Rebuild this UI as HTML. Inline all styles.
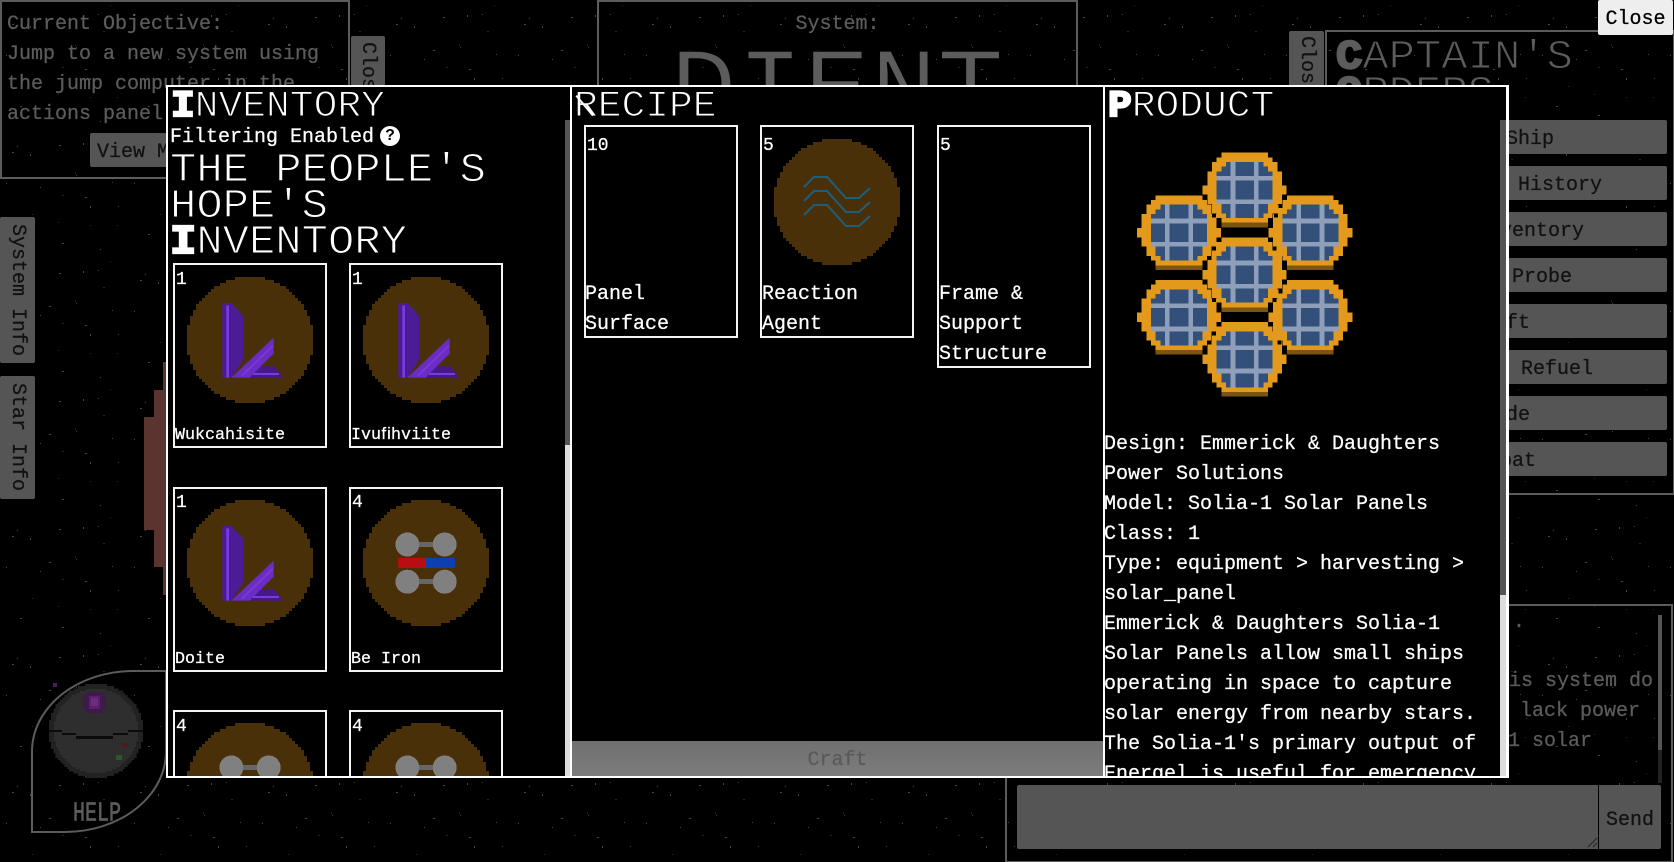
<!DOCTYPE html>
<html><head><meta charset="utf-8"><title>Crafting</title>
<style>
html,body{margin:0;padding:0;background:#000;width:1674px;height:862px;overflow:hidden}
body{position:relative;font-family:"Liberation Mono","DejaVu Sans Mono",monospace;font-size:20px;color:#5c5c5c;-webkit-text-stroke:.25px currentColor}
.a{position:absolute}
.t{position:absolute;white-space:pre;line-height:30px}
.h{position:absolute;white-space:pre;font-size:37px;line-height:36px;letter-spacing:0;-webkit-text-stroke:1.1px #000;color:#fff;transform:scaleX(1.07);transform-origin:0 0}
.h2{font-size:41px}
.h b{-webkit-text-stroke:2.2px #fff;font-weight:bold}
.g{color:#5c5c5c}.g b{-webkit-text-stroke:2.2px #5c5c5c}
.btn{position:absolute;left:1333px;width:334px;height:34px;background:#555;color:#111;border-radius:2px;text-align:center;line-height:39px;overflow:hidden}
.tab{position:absolute;background:#555;color:#111;border-radius:2px;writing-mode:vertical-rl;text-align:center;line-height:35px}
.card{position:absolute;width:150px;border:2px solid #f4f4f4}
.n{position:absolute;white-space:pre;font-size:18px;line-height:30px;color:#fff}
.l{position:absolute;white-space:pre;font-size:16.67px;line-height:30px;color:#fff}
.w{position:absolute;white-space:pre;line-height:30px;color:#fff}
#m{position:absolute;left:0;top:0;width:1674px;height:862px;clip-path:inset(87px 168px 86px 168px);background:#000}
svg{position:absolute;display:block}
</style></head><body>

<svg width="1674" height="862" style="left:0;top:0" shape-rendering="crispEdges">
<defs>
<pattern id="st" width="128" height="128" patternUnits="userSpaceOnUse">
<g fill="#444">
<rect x="59" y="17" width="2" height="1"/><rect x="83" y="15" width="1" height="2"/><rect x="98" y="14" width="1" height="1"/>
<rect x="17" y="18" width="1" height="1"/><rect x="12" y="24" width="2" height="1"/><rect x="30" y="26" width="1" height="2"/>
<rect x="49" y="50" width="2" height="1"/><rect x="76" y="47" width="1" height="1"/><rect x="112" y="54" width="1" height="1"/>
<rect x="6" y="55" width="1" height="1"/><rect x="40" y="59" width="1" height="1"/><rect x="85" y="69" width="2" height="1"/>
<rect x="90" y="78" width="1" height="2"/><rect x="118" y="78" width="1" height="1"/><rect x="62" y="115" width="2" height="1"/>
<rect x="100" y="121" width="1" height="1"/><rect x="20" y="106" width="2" height="1"/>
</g>
<g fill="#2a2a2a"><rect x="58" y="94" width="1" height="1"/><rect x="90" y="97" width="1" height="1"/><rect x="117" y="97" width="1" height="1"/><rect x="75" y="45" width="1" height="1"/><rect x="110" y="5" width="1" height="1"/><rect x="32" y="86" width="1" height="1"/></g>
<rect x="103" y="31" width="2" height="1" fill="#1c1c3f"/>
<rect x="62" y="67" width="2" height="1" fill="#3f1c1c"/>
</pattern>
<path id="c" d="M16 0H26V1H29V2H31V3H33V4H34V5H35V6H36V7H37V8H38V9H39V11H40V13H41V16H42V26H41V29H40V31H39V33H38V34H37V35H36V36H35V37H34V38H33V39H31V40H29V41H26V42H16V41H13V40H11V39H9V38H8V37H7V36H6V35H5V34H4V33H3V31H2V29H1V26H0V16H1V13H2V11H3V9H4V8H5V7H6V6H7V5H8V4H9V3H11V2H13V1H16Z"/>
</defs>
<rect width="1674" height="862" fill="url(#st)"/>
<!-- red planet -->
<rect x="144" y="417" width="24" height="113" fill="#5c342f"/>
<rect x="154" y="390" width="14" height="177" fill="#5c342f"/>
<rect x="163" y="362" width="5" height="233" fill="#5c342f"/>
<!-- help planet -->
<g transform="translate(49 684) scale(2.238)"><use href="#c" fill="#222"/></g>
<g transform="translate(54 689) scale(2)"><use href="#c" fill="#2e2e2e"/></g>
<g fill="#0b0b0b">
<rect x="49" y="730" width="13" height="2"/><rect x="62" y="733" width="14" height="2"/><rect x="76" y="736" width="37" height="3"/><rect x="113" y="733" width="15" height="2"/><rect x="128" y="730" width="15" height="2"/>
</g>
<g fill="#3c1a4a"><rect x="86" y="692" width="17" height="21"/><rect x="83" y="695" width="23" height="15"/></g>
<rect x="89" y="696" width="11" height="13" fill="#5a1f6e"/>
<rect x="91" y="698" width="7" height="8" fill="#6e2a80"/>
<rect x="122" y="743" width="6" height="4" fill="#4a1c1c"/>
<rect x="116" y="755" width="6" height="5" fill="#2a5a2a"/>
<rect x="53" y="683" width="4" height="4" fill="#4a1c5c"/>
</svg>
<div class="a" style="left:31px;top:670px;width:132px;height:159px;border:2px solid #5c5c5c;border-radius:75% 0 75% 0 / 50% 0 50% 0"></div>
<div class="t" style="left:73px;top:800px;color:#5c5c5c;-webkit-text-stroke:.5px #5c5c5c;transform:scaleY(1.35)">HELP</div>

<!-- objective -->
<div class="a" style="left:0;top:0;width:346px;height:175px;border:2px solid #5c5c5c"></div>
<div class="t" style="left:7px;top:10px">Current Objective:
Jump to a new system using
the jump computer in the
actions panel</div>
<div class="a" style="left:90px;top:133px;width:140px;height:34px;background:#555;border-radius:2px"></div>
<div class="t" style="left:97px;top:138px;color:#111">View Mission</div>
<div class="tab" style="left:351px;top:36px;width:34px;height:90px;padding-top:6px;text-align:left">Close</div>
<div class="tab" style="left:0;top:217px;width:35px;height:146px">System Info</div>
<div class="tab" style="left:0;top:376px;width:35px;height:123px">Star Info</div>

<!-- system -->
<div class="a" style="left:597px;top:0;width:477px;height:100px;border:2px solid #5c5c5c"></div>
<div class="t" style="left:597px;width:481px;top:10px;text-align:center">System:</div>
<div class="a" style="left:670px;top:33px;font-size:105px;line-height:120px;-webkit-text-stroke:1.5px #000;color:#5c5c5c;white-space:pre;transform:scaleX(1.06);transform-origin:0 0">DIENT</div>

<!-- captain -->
<div class="tab" style="left:1289px;top:31px;width:35px;height:90px;padding-top:5px;text-align:left">Close</div>
<div class="a" style="left:1325px;top:30px;width:346px;height:461px;border:2px solid #5c5c5c"></div>
<div class="h h2 g" style="left:1336px;top:40px"><b>C</b>APTAIN'S
<b>O</b>RDERS</div>
<div class="btn" style="top:120px">Your Ship</div>
<div class="btn" style="top:166px">Captain's History</div>
<div class="btn" style="top:212px">Ship Inventory</div>
<div class="btn" style="top:258px">Launch Probe</div>
<div class="btn" style="top:304px">Craft</div>
<div class="btn" style="top:350px;text-indent:6px">Repair &amp; Refuel</div>
<div class="btn" style="top:396px">Trade</div>
<div class="btn" style="top:442px">Combat</div>
<div class="a" style="left:1598px;top:0;width:75px;height:35px;background:#eee;color:#000;border-radius:2px;text-align:center;line-height:40px;z-index:5">Close</div>

<!-- chat -->
<div class="a" style="left:1005px;top:604px;width:664px;height:255px;border:2px solid #5c5c5c"></div>
<div class="t" style="left:1513px;top:608px">.</div>
<div class="t" style="left:1509px;top:667px">is system do</div>
<div class="t" style="left:1520px;top:697px">lack power</div>
<div class="t" style="left:1508px;top:727px">1 solar</div>
<div class="a" style="left:1658px;top:615px;width:4px;height:135px;background:#555"></div>
<div class="a" style="left:1658px;top:750px;width:4px;height:33px;background:#222"></div>
<div class="a" style="left:1017px;top:785px;width:581px;height:64px;background:#555;border-radius:2px 0 0 2px"></div>
<svg class="a" style="left:1586px;top:836px" width="12" height="12"><path d="M2 11L11 2M7 11L11 7" stroke="#222" stroke-width="1"/></svg>
<div class="a" style="left:1599px;top:785px;width:62px;height:64px;background:#555;border-radius:0 2px 2px 0"></div>
<div class="t" style="left:1606px;top:806px;color:#111">Send</div>

<!-- modal frame -->
<div class="a" style="left:166px;top:85px;width:1343px;height:693px;background:#fff"></div>

<div id="m">
<div class="a" style="left:570px;top:85px;width:2px;height:693px;background:#fff"></div>
<div class="a" style="left:1103px;top:85px;width:2px;height:693px;background:#fff"></div>

<!-- inventory -->
<div class="h" style="left:171px;top:89px"><b>I</b>NVENTORY</div>
<div class="w" style="left:170px;top:123px">Filtering Enabled</div>
<div class="a" style="left:380px;top:126px;width:20px;height:20px;border-radius:50%;background:#fff;color:#000;font:bold 16px/20px 'Liberation Sans',sans-serif;text-align:center;-webkit-text-stroke:0">?</div>
<div class="h h2" style="left:170px;top:153px">THE PEOPLE'S
HOPE'S
<b>I</b>NVENTORY</div>

<svg width="1674" height="862" style="left:0;top:0" shape-rendering="crispEdges">
<defs>
<g id="ore" transform="scale(.3333)" shape-rendering="auto">
<path d="M106 78h27l35 37V250L133 302H106Z" fill="#4a1d96"/>
<rect x="118" y="85" width="8" height="217" fill="#7a3adc"/>
<path d="M188 268H263L288 302H188Z" fill="#45198a"/>
<path d="M133 302L260 182V230L188 302Z" fill="#6a2cc4"/>
<path d="M165 296L258 206" stroke="#7d3ddc" stroke-width="4" fill="none"/>
<rect x="198" y="288" width="78" height="6" fill="#7a3adc"/>
</g>
<g id="fe">
<circle cx="44.4" cy="44.5" r="12" fill="#808080"/><circle cx="81.7" cy="44.5" r="12" fill="#808080"/>
<circle cx="44.4" cy="81.7" r="12" fill="#808080"/><circle cx="81.7" cy="81.7" r="12" fill="#808080"/>
<rect x="56" y="42" width="14" height="5" fill="#666"/><rect x="56" y="79" width="14" height="5" fill="#666"/>
<rect x="35" y="58" width="28" height="10" fill="#b80d12"/><rect x="63" y="58" width="29" height="10" fill="#0d3fb0"/>
</g>
<g id="disc" transform="scale(3)"><use href="#c" fill="#4a3009"/></g>
</defs>
<g transform="translate(187 277)"><use href="#disc"/><use href="#ore"/></g>
<g transform="translate(363 277)"><use href="#disc"/><use href="#ore"/></g>
<g transform="translate(187 500)"><use href="#disc"/><use href="#ore"/></g>
<g transform="translate(363 500)"><use href="#disc"/><use href="#fe"/></g>
<g transform="translate(187 723)"><use href="#disc"/><use href="#fe"/></g>
<g transform="translate(363 723)"><use href="#disc"/><use href="#fe"/></g>
<g transform="translate(774 139)"><use href="#disc"/>
<g fill="none" stroke="#1b5f7f" stroke-width="2" shape-rendering="auto">
<path d="M30 48L40 38H53L72 59H85L96 49"/>
<path d="M30 62L40 52H53L72 73H85L96 63"/>
<path d="M30 76L40 66H53L72 87H85L96 77"/>
</g></g>
</svg>

<div class="card" style="left:173px;top:263px;height:181px"></div>
<div class="card" style="left:349px;top:263px;height:181px"></div>
<div class="card" style="left:173px;top:487px;height:181px"></div>
<div class="card" style="left:349px;top:487px;height:181px"></div>
<div class="card" style="left:173px;top:710px;height:181px;background:none"></div>
<div class="card" style="left:349px;top:710px;height:181px;background:none"></div>
<div class="n" style="left:176px;top:265px">1</div><div class="n" style="left:352px;top:265px">1</div>
<div class="n" style="left:176px;top:488px">1</div><div class="n" style="left:352px;top:488px">4</div>
<div class="n" style="left:176px;top:712px">4</div><div class="n" style="left:352px;top:712px">4</div>
<div class="l" style="left:175px;top:421px">Wukcahisite</div>
<div class="l" style="left:351px;top:421px">Ivuﬁhviite</div>
<div class="l" style="left:175px;top:645px">Doite</div>
<div class="l" style="left:351px;top:645px">Be Iron</div>

<div class="a" style="left:565px;top:120px;width:5px;height:325px;background:#555"></div>
<div class="a" style="left:565px;top:445px;width:5px;height:331px;background:#ddd"></div>

<!-- recipe -->
<div class="h" style="left:574px;top:89px">RECIPE</div>
<div class="a" style="left:577px;top:95px;width:26px;height:2px;background:#fff;transform:rotate(50deg);transform-origin:0 0"></div>
<div class="card" style="left:584px;top:125px;height:209px"></div>
<div class="card" style="left:760px;top:125px;height:209px"></div>
<div class="card" style="left:937px;top:125px;height:239px"></div>
<div class="n" style="left:587px;top:131px">10</div>
<div class="n" style="left:763px;top:131px">5</div>
<div class="n" style="left:940px;top:131px">5</div>
<div class="w" style="left:585px;top:280px">Panel
Surface</div>
<div class="w" style="left:762px;top:280px">Reaction
Agent</div>
<div class="w" style="left:939px;top:280px">Frame &amp;
Support
Structure</div>
<div class="a" style="left:572px;top:741px;width:531px;height:35px;background:linear-gradient(#707070,#7c7c7c)"></div>
<div class="t" style="left:572px;width:531px;top:746px;text-align:center;color:#5a5a5a">Craft</div>

<!-- product -->
<div class="h" style="left:1108px;top:89px"><b>P</b>RODUCT</div>
<svg width="300" height="330" viewBox="0 0 900 990" style="left:1100px;top:80px" shape-rendering="crispEdges">
<defs>
<g id="hx" transform="scale(14)">
<rect x="4" y="15" width="10" height="1" fill="#7a5412"/>
<path d="M4 0H14V1H15V2H16V4H17V7H18V9H17V11H16V13H15V14H14V15H4V14H3V13H2V11H1V9H0V7H1V4H2V2H3V1H4Z" fill="#e39a1c"/>
<path d="M5 2H13V3H14V4H15V11H14V13H13V14H5V13H4V11H3V4H4V3H5Z" fill="#33507a"/>
<path d="M6 2H7V5H11V2H12V5H15V6H12V10H15V11H12V14H11V11H7V14H6V11H3V10H6V6H3V5H6ZM7 6V10H11V6Z" fill="#8f9eb9" fill-rule="evenodd"/>
</g>
</defs>
<use href="#hx" x="111" y="346"/>
<use href="#hx" x="505" y="346"/>
<use href="#hx" x="111" y="600"/>
<use href="#hx" x="505" y="600"/>
<use href="#hx" x="308" y="218"/>
<use href="#hx" x="308" y="472"/>
<use href="#hx" x="308" y="726"/>
<g fill="#000">
<rect x="336" y="400" width="12" height="12"/><rect x="522" y="400" width="12" height="12"/><rect x="536" y="372" width="12" height="12"/>
<rect x="336" y="500" width="12" height="12"/><rect x="322" y="528" width="12" height="12"/><rect x="518" y="500" width="12" height="12"/>
<rect x="536" y="628" width="12" height="12"/><rect x="336" y="654" width="12" height="12"/><rect x="518" y="654" width="12" height="12"/>
<rect x="336" y="754" width="12" height="12"/><rect x="322" y="782" width="12" height="12"/><rect x="532" y="782" width="12" height="12"/>
</g>
</svg>
<div class="w" style="left:1104px;top:430px">Design: Emmerick &amp; Daughters
Power Solutions
Model: Solia-1 Solar Panels
Class: 1
Type: equipment &gt; harvesting &gt;
solar_panel
Emmerick &amp; Daughters Solia-1
Solar Panels allow small ships
operating in space to capture
solar energy from nearby stars.
The Solia-1's primary output of
Energel is useful for emergency</div>
<div class="a" style="left:1500px;top:120px;width:6px;height:475px;background:#555"></div>
<div class="a" style="left:1500px;top:595px;width:6px;height:181px;background:#ddd"></div>
</div>
</body></html>
